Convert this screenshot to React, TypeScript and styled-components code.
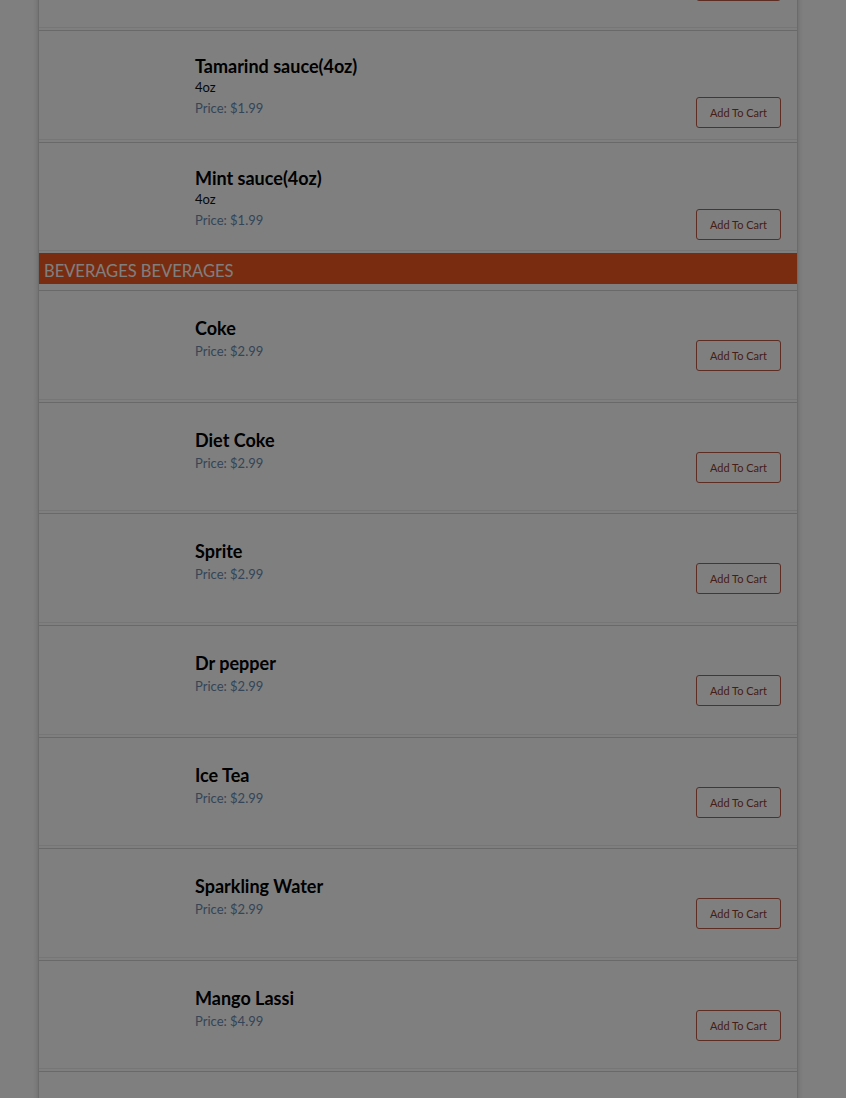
import React, { useLayoutEffect, useRef } from "react";
import styled, { createGlobalStyle } from "styled-components";

const GlobalStyle = createGlobalStyle`
  html, body {
    margin: 0;
    padding: 0;
    background: #ffffff;
    font-family: Lato, "Liberation Sans", sans-serif;
  }
`;

const Backdrop = styled.div`
  position: fixed;
  inset: 0;
  background: rgba(0, 0, 0, 0.5);
  z-index: 10;
`;

const PageWrapper = styled.div`
  padding: 0 0 200px 38px;
`;

const MenuCard = styled.div`
  width: 758px;
  border: 1px solid #d6d6d6;
  box-shadow: 0 0 6px rgba(0, 0, 0, 0.18);
  background: #ffffff;
`;

const SectionHeader = styled.div`
  height: 31px;
  line-height: 37px;
  padding-left: 5px;
  margin-bottom: 6px;
  background: #f45820;
  color: #ffffff;
  font-size: 16.5px;
  text-transform: uppercase;
`;

const ItemRow = styled.div<{ $tall?: boolean }>`
  display: flex;
  box-sizing: border-box;
  height: ${(p) => (p.$tall ? "125px" : "109.6px")};
  padding: 14px 16px 12px 16px;
  border-top: 1px solid #d2d2d2;
  border-bottom: 1px solid #ececec;
  margin-bottom: 2px;
`;

const ImageSlot = styled.div`
  width: 140px;
  height: 80px;
  flex-shrink: 0;
`;

const ItemInfo = styled.div<{ $compact?: boolean }>`
  flex: 1;
  display: flex;
  flex-direction: column;
  padding-top: ${(p) => (p.$compact ? "12px" : "10px")};
`;

const ItemName = styled.div`
  font-size: 18px;
  font-weight: 700;
  line-height: 22px;
  color: #000000;
`;

const ItemDesc = styled.div`
  font-size: 13px;
  line-height: 18px;
  margin-top: 1px;
  color: #111111;
`;

const PriceLine = styled.div`
  display: flex;
  align-items: center;
  justify-content: space-between;
  margin-top: -1px;
`;

const Price = styled.span`
  font-size: 13px;
  color: #6a8aae;
  margin-top: -7px;
`;

const CartButton = styled.button`
  width: 85px;
  height: 31px;
  padding: 0;
  margin-top: 2px;
  background: #ffffff;
  border: 1px solid #bb5a46;
  border-radius: 3px;
  color: #8e3c2e;
  font-family: Lato, "Liberation Sans", sans-serif;
  font-size: 11px;
  cursor: pointer;
`;

type Item = { name: string; desc?: string; price: string };

const sauces: Item[] = [
  { name: "Onion chutney(4oz)", desc: "4oz", price: "$1.99" },
  { name: "Tamarind sauce(4oz)", desc: "4oz", price: "$1.99" },
  { name: "Mint sauce(4oz)", desc: "4oz", price: "$1.99" },
];

const beverages: Item[] = [
  { name: "Coke", price: "$2.99" },
  { name: "Diet Coke", price: "$2.99" },
  { name: "Sprite", price: "$2.99" },
  { name: "Dr pepper", price: "$2.99" },
  { name: "Ice Tea", price: "$2.99" },
  { name: "Sparkling Water", price: "$2.99" },
  { name: "Mango Lassi", price: "$4.99" },
  { name: "Masala Chai", price: "$2.99" },
  { name: "Bottled Water", price: "$1.99" },
];

function MenuItem({
  item,
  tall,
  rowRef,
}: {
  item: Item;
  tall?: boolean;
  rowRef?: React.Ref<HTMLDivElement>;
}) {
  return (
    <ItemRow ref={rowRef} $tall={tall}>
      <ImageSlot />
      <ItemInfo $compact={!item.desc}>
        <ItemName>{item.name}</ItemName>
        {item.desc && <ItemDesc>{item.desc}</ItemDesc>}
        <PriceLine>
          <Price>Price: {item.price}</Price>
          <CartButton>Add To Cart</CartButton>
        </PriceLine>
      </ItemInfo>
    </ItemRow>
  );
}

export default function App() {
  const anchor = useRef<HTMLDivElement>(null);

  useLayoutEffect(() => {
    // page is shown scrolled, Tamarind row sits 30px from the top
    if (anchor.current) {
      const top = anchor.current.getBoundingClientRect().top + window.scrollY;
      window.scrollTo(0, top - 30);
    }
  }, []);

  return (
    <>
      <GlobalStyle />
      <PageWrapper>
        <MenuCard>
          <SectionHeader>Sauces Sauces</SectionHeader>
          {sauces.map((item, i) => (
            <MenuItem
              key={item.name}
              item={item}
              tall={i === 0}
              rowRef={i === 1 ? anchor : undefined}
            />
          ))}
          <SectionHeader>Beverages Beverages</SectionHeader>
          {beverages.map((item) => (
            <MenuItem key={item.name} item={item} />
          ))}
        </MenuCard>
      </PageWrapper>
      <Backdrop />
    </>
  );
}
